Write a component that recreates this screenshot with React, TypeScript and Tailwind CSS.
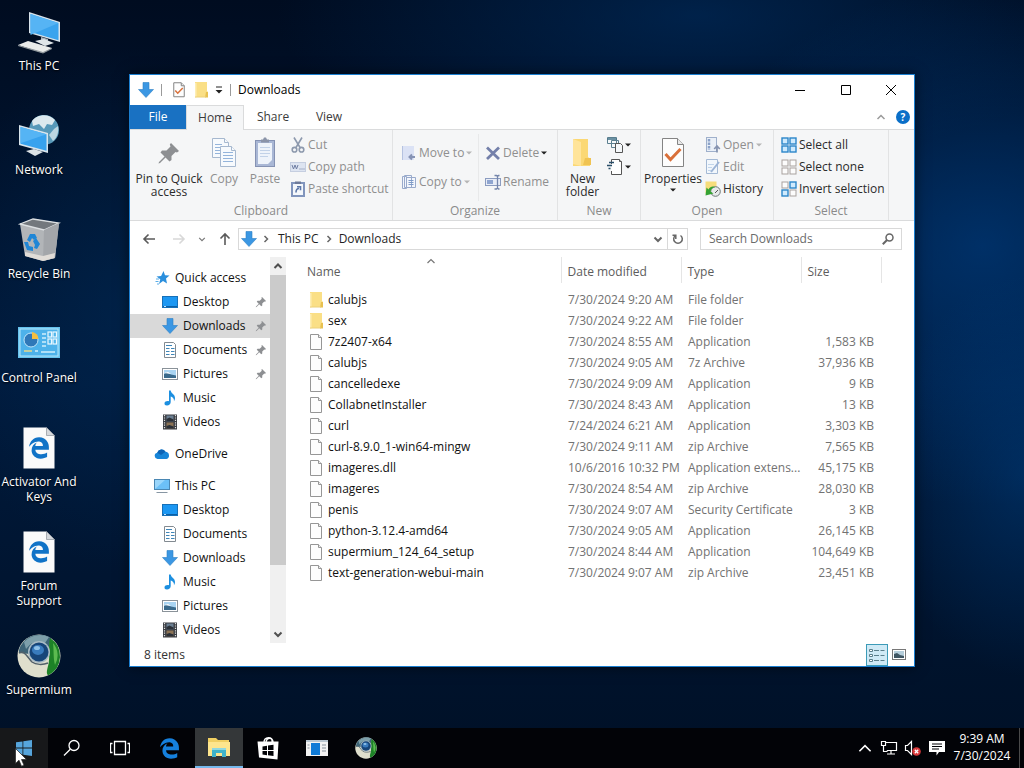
import type { ReactNode } from "react";
import { FaEdgeLegacy } from "react-icons/fa6";

/* ---------- shared icons ---------- */

const DownIcon = ({ className = "w-4 h-4" }: { className?: string }) => (
  <svg viewBox="0 0 16 16" className={className}>
    <path d="M5 0.500h6v7h4.500L8 15.500L0.500 7.500H5z" fill="#3b97e3" stroke="#2d7fc4" strokeWidth="0.600" />
  </svg>
);

const FolderIcon = ({ className = "w-4 h-4" }: { className?: string }) => (
  <svg viewBox="0 0 16 16" className={className}>
    <path d="M2 0h12v9l1 1v5H2z" fill="#fadf86" />
    <path d="M2 1h1.500v14.500H2z" fill="#fdeeb5" />
    <path d="M13 10h2v5.500h-3z" fill="#e8c150" />
    <path d="M2 15h11" stroke="#ecd07a" />
  </svg>
);

const FileIcon = () => (
  <svg viewBox="0 0 16 16" className="w-4 h-4">
    <path d="M2.500 0.500h8l3 3v12h-11z" fill="#fdfdfd" stroke="#969696" />
    <path d="M10.500 0.500v3h3" fill="#eee" stroke="#969696" />
  </svg>
);

const PinIcon = ({ className }: { className: string }) => (
  <svg viewBox="0 0 24 24" className={className}>
    <path
      d="M14 2l8 8-2 1.500-1.500-0.500-4 4 0 4-2 1.500-4-4L3 22l-1.500 0.500L2 21l5.500-5.500-4-4L5 9.500l4.500 0 4-4L12.800 3.500z"
      fill="#8d8f92"
    />
  </svg>
);

const StarIcon = () => (
  <svg viewBox="0 0 16 16" className="w-4 h-4">
    <path d="M9.500 1l1.500 4.300 4.500 0.200-3.500 3 1 5L9 11 5 14l1.300-4.800L2.500 6.500l4.600-0.500z" fill="#2b8fdd" />
    <path d="M2 9h3M1.500 11.500h3M3 14h2" stroke="#5baee8" strokeWidth="1" />
  </svg>
);

const DesktopIcon = () => (
  <svg viewBox="0 0 16 16" className="w-4 h-4">
    <rect x="0.500" y="2.500" width="15" height="11" fill="#1c97f2" stroke="#1670b8" />
    <path d="M1 12.500h14" stroke="#0b5fa5" />
    <path d="M2 12.500h2" stroke="#bfe2ff" />
  </svg>
);

const DocumentIcon = () => (
  <svg viewBox="0 0 16 16" className="w-4 h-4">
    <path d="M2.500 0.500h9l2 2v13h-11z" fill="#fff" stroke="#828a91" />
    <path d="M4 3.500h6M4 6.500h3.500M9 6.500h3.500M4 9.500h3.500M9 9.500h3.500M4 12.500h3.500M9 12.500h3.500" stroke="#3f86b8" strokeWidth="1.200" />
  </svg>
);

const PictureIcon = () => (
  <svg viewBox="0 0 16 16" className="w-4 h-4">
    <rect x="0.500" y="2.500" width="15" height="11" fill="#fff" stroke="#8a9299" />
    <rect x="2" y="4" width="12" height="8" fill="#a9d4f2" />
    <path d="M2 8l3-1.500 4 2 5 1v2.500H2z" fill="#3a6a8c" />
    <path d="M2 7l4-1 3 2z" fill="#fff" />
  </svg>
);

const MusicIcon = () => (
  <svg viewBox="0 0 16 16" className="w-4 h-4">
    <path d="M7 0.500h1.700c0.300 3 4.300 3.500 4.300 7.500 0 1.300-0.500 2.500-1 3.200 0.200-3-1.500-4.200-3.300-4.700V12c0 2-1.700 3.500-3.700 3.500S2.500 14.500 2.500 13.200 4.200 11 5.700 11c0.500 0 1 0.100 1.300 0.300z" fill="#1c8fe0" />
  </svg>
);

const VideoIcon = () => (
  <svg viewBox="0 0 16 16" className="w-4 h-4">
    <rect x="1" y="0.500" width="14" height="15" fill="#3a3d42" />
    <path d="M2.500 1v14M13.500 1v14" stroke="#e2e2e2" strokeWidth="1.200" strokeDasharray="1.200 1.200" />
    <rect x="4.500" y="1.500" width="7" height="6" fill="#6b7f92" />
    <rect x="4.500" y="8.500" width="7" height="6" fill="#8b7355" />
    <path d="M4.500 5l3-1.500 4 2v2h-7zM4.500 12l3-1 4 1.500v2h-7z" fill="#2a3038" />
  </svg>
);

const CloudIcon = () => (
  <svg viewBox="0 0 16 16" className="w-4 h-4">
    <path d="M3.500 13a3.200 3.200 0 0 1-0.300-6.300A4.600 4.600 0 0 1 11.500 5.800 3.700 3.700 0 0 1 12.500 13z" fill="#1785d8" />
    <path d="M3.200 6.700A4.600 4.600 0 0 1 11.500 5.800L7 9z" fill="#0c63b5" />
  </svg>
);

const PcIcon = () => (
  <svg viewBox="0 0 16 16" className="w-4 h-4">
    <rect x="0.500" y="1.500" width="15" height="10" fill="#6cc0f7" stroke="#4a87b3" />
    <path d="M1 11L11 2H1z" fill="#9ad6fb" />
    <path d="M2.500 14.500h11" stroke="#8796a3" />
  </svg>
);

const SupermiumIcon = ({ className }: { className: string }) => (
  <svg viewBox="0 0 44 44" className={className}>
    <circle cx="22" cy="22" r="21.500" fill="#dfdfcd" />
    <path d="M3.500 12A21.500 21.500 0 0 1 34 4L31 16 13 20 2 19C1.500 17 2.500 14 3.500 12z" fill="#3d6477" />
    <path d="M7 8A21.500 21.500 0 0 1 32 3L28 9C20 6 14 8 9 15z" fill="#7d9faa" />
    <path d="M33 4A21.500 21.500 0 0 1 31 41.500C28 38 32 32 32 26 33 19 31 12 33 4z" fill="#1d8227" />
    <path d="M36 9a19 19 0 0 1 2 22c-2-8-1-15-2-22z" fill="#5cbb50" />
    <path d="M2 19c6-3 8 4 13 9 4 3 11 3 16 1" fill="none" stroke="#51606a" strokeWidth="1.500" />
    <circle cx="22" cy="18" r="11" fill="#a9bbc5" />
    <circle cx="22" cy="18" r="9.500" fill="#174579" />
    <ellipse cx="21" cy="16" rx="6" ry="5" fill="#397bbd" />
    <ellipse cx="20" cy="14" rx="3" ry="2" fill="#8fc1e8" />
  </svg>
);

const Caret = ({ color = "#222" }: { color?: string }) => (
  <svg viewBox="0 0 6 4" className="w-[6px] h-[4px] shrink-0">
    <path d="M0 0.500h6L3 3.500z" fill={color} />
  </svg>
);

const Chevron = ({ d, className = "w-[10px] h-[10px]", color = "#666", width = 1.500 }: { d: string; className?: string; color?: string; width?: number }) => (
  <svg viewBox="0 0 10 10" className={className} fill="none" stroke={color} strokeWidth={width}>
    <path d={d} />
  </svg>
);

const UP = "M1.500 7L5 3.500 8.500 7";
const DOWN = "M1.500 3.500L5 7 8.500 3.500";
const RIGHT = "M3.500 2L6.500 5 3.500 8";

/* ---------- desktop ---------- */

const EdgePage = () => (
  <svg viewBox="0 0 44 44" className="w-11 h-11">
    <path d="M6.500 1.500h23l8 8v33h-31z" fill="#fafafa" />
    <path d="M29.500 1.500v8h8z" fill="#d5d8dc" stroke="#8d949b" strokeWidth="0.700" />
    <FaEdgeLegacy x="11" y="11" size={22} color="#1173c7" />
  </svg>
);

const desktopItems = [
  {
    label: "This PC",
    icon: (
      <svg viewBox="0 0 44 44" className="w-11 h-11">
        <path d="M12 2l31 10v20L12 23z" fill="#d9e3ea" />
        <path d="M13.500 4l28 9v17.200l-28-8.200z" fill="#3aa4ee" />
        <path d="M13.500 4l28 9-28 12z" fill="#56b4f4" />
        <path d="M24 27l7 2v4l-7-2z" fill="#a8b2ba" />
        <path d="M18 31l9-2 10 4-9 3z" fill="#dfe5e8" />
        <path d="M1 35l10-4 24 7-9 5z" fill="#e9ebea" />
        <path d="M1 35l25 7 9-4v1l-9 4.500L1 36z" fill="#8f979c" />
      </svg>
    ),
  },
  {
    label: "Network",
    icon: (
      <svg viewBox="0 0 44 44" className="w-11 h-11">
        <circle cx="27" cy="16" r="15" fill="#5799b9" />
        <path d="M15 7c5-7 17-8 23-1l-3 5-5-1-3 5-5-5-6 2z" fill="#dce9ee" />
        <path d="M37 15l4-3c1 6-1 12-5 15l-4-6z" fill="#bcd6e1" />
        <path d="M2 11l29 8v20L2 31z" fill="#d8e4eb" />
        <path d="M3.500 13l26 7.200v16.500l-26-7z" fill="#37a2ee" />
        <path d="M3.500 13l26 7.200-26 9z" fill="#55b4f4" />
        <path d="M9 37l8-2 9 3-8 4z" fill="#dde3e6" />
      </svg>
    ),
  },
  {
    label: "Recycle Bin",
    icon: (
      <svg viewBox="0 0 44 44" className="w-11 h-11">
        <path d="M3 6L16 1l26 4-4 35-12 3L8 38z" fill="#b2b5b8" />
        <path d="M3 6L16 1l26 4-15 7z" fill="#73787d" stroke="#dce0e2" strokeWidth="1.300" />
        <path d="M27 12l15-7-4 35-12 3z" fill="#a3a6aa" />
        <path d="M8 34l18 4 12-3-0.500 5L26 43 8 38z" fill="#e0dcd7" />
        <g fill="#1f86d6">
          <path d="M10 22l3-6 5 0 2 4-3 2-2-2-2 4z" />
          <path d="M19 20l4 6-3 5-3-1 1-3-2-4z" />
          <path d="M7 24l4 0 1 4 4 1 0 4-6-1z" />
        </g>
      </svg>
    ),
  },
  {
    label: "Control Panel",
    icon: (
      <svg viewBox="0 0 44 44" className="w-11 h-11">
        <rect x="1" y="5" width="42" height="31" fill="#65c2ee" />
        <rect x="3" y="7" width="38" height="27" fill="#4db2ea" stroke="#b5e5fa" />
        <circle cx="14" cy="18" r="7" fill="#2f78b8" stroke="#bfe6fa" />
        <path d="M15 17v-7a7 7 0 0 1 6.500 7z" fill="#f4bf3f" />
        <path d="M25 12h4M25 16h4M25 20h4M25 24h4M18 29h3M24 30h14" stroke="#cfeefc" strokeWidth="1.500" />
        <g fill="#4fb4ea" stroke="#eaf8ff" strokeWidth="1.200">
          <rect x="31" y="10" width="3.500" height="5" />
          <rect x="36" y="10" width="3.500" height="5" />
          <rect x="31" y="17" width="3.500" height="5" />
          <rect x="36" y="17" width="3.500" height="5" />
        </g>
        <path d="M7 29h8" stroke="#e8d98a" strokeWidth="1.500" />
      </svg>
    ),
  },
  { label: "Activator And Keys", icon: <EdgePage /> },
  { label: "Forum Support", icon: <EdgePage /> },
  { label: "Supermium", icon: <SupermiumIcon className="w-11 h-11" /> },
];

/* ---------- ribbon ---------- */

const copyIcon = (
  <svg viewBox="0 0 32 32" className="w-8 h-8">
    <g fill="#f7fafd" stroke="#a6b8cf">
      <path d="M4.500 1.500h12l4 4v15h-16z" />
      <path d="M16.500 1.500v4h4" />
      <path d="M12.500 9.500h11l4 4v16h-15z" />
      <path d="M23.500 9.500v4h4" />
    </g>
    <path d="M7 7.500h7M7 10.500h5M7 13.500h5M7 16.500h5M15 15.500h10M15 18.500h10M15 21.500h10M15 24.500h10" stroke="#94b4db" />
  </svg>
);

const pasteIcon = (
  <svg viewBox="0 0 32 32" className="w-8 h-8">
    <rect x="6.500" y="3.500" width="19" height="26" fill="#a9b7d5" stroke="#8592b3" />
    <path d="M9 6h14v17l-4 4H9z" fill="#eef3fa" />
    <path d="M12 5.500V2.500h2l1-2h2l1 2h2v3z" fill="#8a93a8" />
    <path d="M11 10.500h10M11 13.500h10M11 16.500h10M11 19.500h8" stroke="#c2d2e8" />
  </svg>
);

const cutIcon = (
  <svg viewBox="0 0 16 16" className="w-4 h-4" fill="none" stroke="#8d99ad" strokeWidth="1.600">
    <path d="M4 0.500l6 10M12 0.500l-6 10" />
    <circle cx="4.500" cy="12.700" r="2.300" />
    <circle cx="11.500" cy="12.700" r="2.300" />
  </svg>
);

const copyPathIcon = (
  <svg viewBox="0 0 16 16" className="w-4 h-4">
    <rect x="0.500" y="3.500" width="15" height="9" fill="#dde4f1" stroke="#c5cee0" />
    <path d="M2 6l1.500 4L5 6l1.500 4L8 6M9.500 10h1M11.500 10h1M13.500 10h1" stroke="#6e7da3" fill="none" />
  </svg>
);

const pasteShortcutIcon = (
  <svg viewBox="0 0 16 16" className="w-4 h-4">
    <rect x="2" y="2" width="12" height="13" fill="#f4f7fb" stroke="#8195bd" strokeWidth="2" />
    <path d="M5 0.500h6v2.500H5z" fill="#6d7a99" />
    <path d="M6 11.500c0-3 1-4 3-4M7 5.800h3.500v3.500" stroke="#5c77a8" strokeWidth="1.600" fill="none" />
  </svg>
);

const moveToIcon = (
  <svg viewBox="0 0 16 16" className="w-4 h-4">
    <path d="M1 1h12v14H1z" fill="#dbe2f5" />
    <path d="M1 1h1v14H1z" fill="#b5c2e0" />
    <path d="M14 12H8m3-2.500L8.500 12l2.500 2.500" stroke="#8693b5" strokeWidth="2" fill="none" />
  </svg>
);

const copyToIcon = (
  <svg viewBox="0 0 16 16" className="w-4 h-4" fill="#f3f6fc" stroke="#99aacb">
    <path d="M1.500 2.500h4v12h-4zM3.500 1.500h7v12h-7zM5.500 3.500h9v10h-9z" />
    <path d="M7.500 6.500h5M7.500 8.500h5M7.500 10.500h5" stroke="#7e9cc9" />
  </svg>
);

const deleteIcon = (
  <svg viewBox="0 0 16 16" className="w-4 h-4">
    <path d="M2 2.500l12 11.500M14 2.500L2 14" stroke="#7480aa" strokeWidth="2.800" />
  </svg>
);

const renameIcon = (
  <svg viewBox="0 0 16 16" className="w-4 h-4" fill="none" stroke="#8b9cc0">
    <rect x="0.500" y="4.500" width="15" height="7" fill="#e8edf7" />
    <rect x="2" y="6" width="6" height="4" fill="#8fa5d0" stroke="none" />
    <path d="M9.500 1.500h2l1 1 1-1h1M12.500 2.500v12M9.500 15h2l1-1 1 1h1" stroke="#7485ab" strokeWidth="1.300" />
  </svg>
);

const newFolderIcon = (
  <svg viewBox="0 0 32 32" className="w-8 h-8">
    <path d="M6 2h15v18l2 2v7H6z" fill="#fbd874" />
    <path d="M6 2l8 3v24l-8-2z" fill="#ffe49a" />
    <path d="M18 21h6v7h-8z" fill="#f0c352" />
  </svg>
);

const newItemIcon = (
  <svg viewBox="0 0 16 16" className="w-4 h-4" fill="#f5f8fa" stroke="#5b7f8f">
    <path d="M0.500 0.500h9v6h-9zM4.500 3.500h7v7h-7z" />
    <path d="M0.500 2h9" stroke="#3d6f86" strokeWidth="1.500" />
    <path d="M8.500 6.500h5l2 2v7h-7z" stroke="#555" />
  </svg>
);

const easyAccessIcon = (
  <svg viewBox="0 0 16 16" className="w-4 h-4" fill="#fff" stroke="#555">
    <path d="M4.500 5V0.500h8l2 2v13h-10V12" />
    <path d="M12.500 0.500v2h2" />
    <path d="M2 3.500h5M0 6.500h5M1.500 9.500h2" stroke="#294e69" strokeWidth="1.400" />
  </svg>
);

const PropertiesIcon = ({ className, line = 1 }: { className: string; line?: number }) => (
  <svg viewBox="0 0 32 32" className={className}>
    <path d="M5.500 1.500h15l6 6v22h-21z" fill="#fdfdfd" stroke="#848484" strokeWidth={line} />
    <path d="M20.500 1.500v6h6" fill="#e8e8e8" stroke="#848484" strokeWidth={line} />
    <path d="M8.500 17l5 5.500 10-10.500" fill="none" stroke="#d9703a" strokeWidth="3" />
  </svg>
);

const openIcon = (
  <svg viewBox="0 0 16 16" className="w-4 h-4" fill="none" stroke="#9fb0cb">
    <rect x="1.500" y="0.500" width="10" height="14" fill="#eaf0f8" />
    <path d="M4 2v11" stroke="#8ba2c8" strokeWidth="2.500" strokeDasharray="2.500 1" />
    <path d="M12 15.500V9m-2.800 3L12 9l2.800 3" stroke="#8593b0" strokeWidth="1.700" />
  </svg>
);

const editIcon = (
  <svg viewBox="0 0 16 16" className="w-4 h-4" fill="none" stroke="#a4b9d4">
    <path d="M1.500 0.500h11v14h-11z" fill="#f2f7fc" />
    <path d="M3 5.500h6M3 8.500h4M3 11.500h3" stroke="#c2d5ea" />
    <path d="M14 3L6 13" stroke="#9cb4d6" strokeWidth="2" />
  </svg>
);

const historyIcon = (
  <svg viewBox="0 0 16 16" className="w-4 h-4">
    <path d="M0.500 0.500h11v12h-11z" fill="#f6dd7b" />
    <circle cx="10.500" cy="10.500" r="4.800" fill="#e7eaea" stroke="#6d7777" />
    <path d="M10 12l3-3" stroke="#555" fill="none" />
    <path d="M0.500 14.500l1-8 2 2c2-3.500 5-3.500 6.500-2-3 0-4 2-4.500 4l3 2z" fill="#35a333" />
  </svg>
);

const tile = (x: number, y: number, on: boolean) => (
  <rect x={x} y={y} width="6" height="6" fill={on ? "#cfeafd" : "#fcfcfc"} stroke={on ? "#2b86c9" : "#a9a29f"} strokeWidth={on ? 1.400 : 1} />
);

const selectIcon = (a: boolean, b: boolean, c: boolean, d: boolean) => (
  <svg viewBox="0 0 16 16" className="w-4 h-4">
    {tile(1, 1, a)}
    {tile(9, 1, b)}
    {tile(1, 9, c)}
    {tile(9, 9, d)}
  </svg>
);

function SmallButton({ icon, label, muted, caret }: { icon: ReactNode; label: string; muted?: boolean; caret?: string }) {
  return (
    <button type="button" className={`flex items-center gap-[2px] h-[22px] whitespace-nowrap ${muted ? "text-[#8f8f8f]" : "text-[#2b2b2b]"}`}>
      {icon}
      <span>{label}</span>
      {caret && <Caret color={caret} />}
    </button>
  );
}

function BigButton({ icon, label, muted, width, caret }: { icon: ReactNode; label: string; muted?: boolean; width: string; caret?: boolean }) {
  return (
    <button type="button" className={`flex flex-col items-center gap-[3px] pt-[3px] leading-[13px] ${width} ${muted ? "text-[#8f8f8f]" : "text-[#2b2b2b]"}`}>
      {icon}
      <span>{label}</span>
      {caret && <Caret />}
    </button>
  );
}

function RibbonGroup({ name, className, children }: { name: string; className: string; children: ReactNode }) {
  return (
    <section aria-label={name} className={`flex flex-col shrink-0 border-r border-[#e2e3e4] ${className}`}>
      <div className="flex items-start grow pt-1">{children}</div>
      <div className="text-center text-[#8a8a8a] h-[17px] leading-4">{name}</div>
    </section>
  );
}

function Ribbon() {
  return (
    <div className="flex h-[92px] shrink-0 bg-[#f5f6f7] border-y border-[#dadbdc]">
      <RibbonGroup name="Clipboard" className="w-[263px]">
        <BigButton icon={<span className="w-8 h-8 grid place-items-center"><PinIcon className="w-6 h-6" /></span>} label="Pin to Quick access" width="w-[78px]" />
        <BigButton icon={copyIcon} label="Copy" muted width="w-8" />
        <BigButton icon={pasteIcon} label="Paste" muted width="w-[50px]" />
        <div>
          <SmallButton icon={cutIcon} label="Cut" muted />
          <SmallButton icon={copyPathIcon} label="Copy path" muted />
          <SmallButton icon={pasteShortcutIcon} label="Paste shortcut" muted />
        </div>
      </RibbonGroup>
      <RibbonGroup name="Organize" className="w-[165px]">
        <div className="flex flex-col gap-[7px] w-[86px] pl-2 pt-2 pb-2 border-r border-[#e8e9ea]">
          <SmallButton icon={moveToIcon} label="Move to" muted caret="#b5b5b5" />
          <SmallButton icon={copyToIcon} label="Copy to" muted caret="#b5b5b5" />
        </div>
        <div className="flex flex-col gap-[7px] pl-[6px] pt-2">
          <SmallButton icon={deleteIcon} label="Delete" muted caret="#222" />
          <SmallButton icon={renameIcon} label="Rename" muted />
        </div>
      </RibbonGroup>
      <RibbonGroup name="New" className="w-[83px]">
        <BigButton icon={newFolderIcon} label="New folder" width="w-[49px]" />
        <div>
          <button type="button" aria-label="New item" className="flex items-center gap-[2px] h-[22px]">
            {newItemIcon}
            <Caret />
          </button>
          <button type="button" aria-label="Easy access" className="flex items-center gap-[2px] h-[22px]">
            {easyAccessIcon}
            <Caret />
          </button>
        </div>
      </RibbonGroup>
      <RibbonGroup name="Open" className="w-[133px]">
        <BigButton icon={<PropertiesIcon className="w-8 h-8" />} label="Properties" width="w-16" caret />
        <div>
          <SmallButton icon={openIcon} label="Open" muted caret="#b5b5b5" />
          <SmallButton icon={editIcon} label="Edit" muted />
          <SmallButton icon={historyIcon} label="History" />
        </div>
      </RibbonGroup>
      <RibbonGroup name="Select" className="w-[115px]">
        <div className="pl-[7px]">
          <SmallButton icon={selectIcon(true, true, true, true)} label="Select all" />
          <SmallButton icon={selectIcon(false, false, false, false)} label="Select none" />
          <SmallButton icon={selectIcon(false, true, true, false)} label="Invert selection" />
        </div>
      </RibbonGroup>
    </div>
  );
}

/* ---------- explorer ---------- */

const quickAccess = [
  { label: "Desktop", icon: <DesktopIcon />, pinned: true },
  { label: "Downloads", icon: <DownIcon />, pinned: true, active: true },
  { label: "Documents", icon: <DocumentIcon />, pinned: true },
  { label: "Pictures", icon: <PictureIcon />, pinned: true },
  { label: "Music", icon: <MusicIcon /> },
  { label: "Videos", icon: <VideoIcon /> },
];

const thisPc = [
  { label: "Desktop", icon: <DesktopIcon /> },
  { label: "Documents", icon: <DocumentIcon /> },
  { label: "Downloads", icon: <DownIcon /> },
  { label: "Music", icon: <MusicIcon /> },
  { label: "Pictures", icon: <PictureIcon /> },
  { label: "Videos", icon: <VideoIcon /> },
];

const files = [
  { name: "calubjs", date: "7/30/2024 9:20 AM", type: "File folder", size: "", folder: true },
  { name: "sex", date: "7/30/2024 9:22 AM", type: "File folder", size: "", folder: true },
  { name: "7z2407-x64", date: "7/30/2024 8:55 AM", type: "Application", size: "1,583 KB" },
  { name: "calubjs", date: "7/30/2024 9:05 AM", type: "7z Archive", size: "37,936 KB" },
  { name: "cancelledexe", date: "7/30/2024 9:09 AM", type: "Application", size: "9 KB" },
  { name: "CollabnetInstaller", date: "7/30/2024 8:43 AM", type: "Application", size: "13 KB" },
  { name: "curl", date: "7/24/2024 6:21 AM", type: "Application", size: "3,303 KB" },
  { name: "curl-8.9.0_1-win64-mingw", date: "7/30/2024 9:11 AM", type: "zip Archive", size: "7,565 KB" },
  { name: "imageres.dll", date: "10/6/2016 10:32 PM", type: "Application extens...", size: "45,175 KB" },
  { name: "imageres", date: "7/30/2024 8:54 AM", type: "zip Archive", size: "28,030 KB" },
  { name: "penis", date: "7/30/2024 9:07 AM", type: "Security Certificate", size: "3 KB" },
  { name: "python-3.12.4-amd64", date: "7/30/2024 9:05 AM", type: "Application", size: "26,145 KB" },
  { name: "supermium_124_64_setup", date: "7/30/2024 8:44 AM", type: "Application", size: "104,649 KB" },
  { name: "text-generation-webui-main", date: "7/30/2024 9:07 AM", type: "zip Archive", size: "23,451 KB" },
];

function NavItem({ label, icon, root, pinned, active }: { label: string; icon: ReactNode; root?: boolean; pinned?: boolean; active?: boolean }) {
  return (
    <a href="#" className={`flex items-center gap-[5px] h-6 pr-[3px] ${root ? "pl-6" : "pl-8"} ${active ? "bg-[#d9d9d9]" : ""}`}>
      {icon}
      <span className="grow whitespace-nowrap">{label}</span>
      {pinned && <PinIcon className="w-3 h-3" />}
    </a>
  );
}

function NavPane() {
  return (
    <div className="flex w-[156px] shrink-0">
      <nav className="grow pt-[9px] text-[#111] overflow-hidden">
        <NavItem label="Quick access" icon={<StarIcon />} root />
        {quickAccess.map((item) => (
          <NavItem key={item.label} {...item} />
        ))}
        <div className="h-2" />
        <NavItem label="OneDrive" icon={<CloudIcon />} root />
        <div className="h-2" />
        <NavItem label="This PC" icon={<PcIcon />} root />
        {thisPc.map((item) => (
          <NavItem key={item.label} {...item} />
        ))}
      </nav>
      <div className="w-4 flex flex-col bg-[#f0f0f0]">
        <button type="button" aria-label="Scroll up" className="h-[18px] shrink-0 grid place-items-center">
          <Chevron d={UP} color="#505050" width={2} />
        </button>
        <div className="h-3/4 bg-[#cbcbcb]" />
        <button type="button" aria-label="Scroll down" className="mt-auto h-[18px] shrink-0 grid place-items-center">
          <Chevron d={DOWN} color="#505050" width={2} />
        </button>
      </div>
    </div>
  );
}

function FileList() {
  return (
    <div className="grow relative">
      <span className="absolute -top-px left-[140px]">
        <Chevron d={UP} color="#777" width={1.200} />
      </span>
      <table className="w-full table-fixed text-left text-[#727272] whitespace-nowrap">
        <thead>
          <tr className="h-[26px] text-[#5c5c5c]">
            <th className="font-normal pt-[3px] pl-[21px]">Name</th>
            <th className="w-[120px] font-normal pt-[3px] pl-[6px] border-l border-[#e5e5e5]">Date modified</th>
            <th className="w-[120px] font-normal pt-[3px] pl-[6px] border-l border-[#e5e5e5]">Type</th>
            <th className="w-20 font-normal pt-[3px] pl-[6px] border-x border-[#e5e5e5]">Size</th>
            <th className="w-[33px]" />
          </tr>
        </thead>
        <tbody>
          <tr className="h-[6px]" />
          {files.map((file) => (
            <tr key={file.name + file.type} className="h-[21px]">
              <td className="p-0 pl-[22px] text-[#111]">
                <div className="flex items-center gap-1">
                  {file.folder ? <FolderIcon /> : <FileIcon />}
                  {file.name}
                </div>
              </td>
              <td className="p-0 pl-[7px]">{file.date}</td>
              <td className="p-0 pl-[7px]">{file.type}</td>
              <td className="p-0 pr-[7px] text-right">{file.size}</td>
              <td />
            </tr>
          ))}
        </tbody>
      </table>
    </div>
  );
}

function TitleBar() {
  return (
    <header className="flex items-center h-[30px] shrink-0 pl-2 text-black">
      <DownIcon className="w-4 h-4" />
      <span className="w-px h-3 ml-[7px] mr-[9px] bg-[#9a9a9a]" />
      <PropertiesIcon className="w-4 h-4" line={2} />
      <FolderIcon className="w-4 h-4 ml-[6px]" />
      <svg viewBox="0 0 8 8" className="w-2 h-2 ml-[6px]">
        <path d="M1 1h6" stroke="#222" />
        <path d="M0.500 4h7L4 7.500z" fill="#222" />
      </svg>
      <span className="w-px h-3 mx-[7px] bg-[#9a9a9a]" />
      <h1>Downloads</h1>
      <div className="ml-auto flex">
        <button type="button" aria-label="Minimize" className="w-[46px] h-7 grid place-items-center">
          <svg viewBox="0 0 10 10" className="w-[10px] h-[10px]"><path d="M0 5.500h10" stroke="#000" /></svg>
        </button>
        <button type="button" aria-label="Maximize" className="w-[45px] h-7 grid place-items-center">
          <svg viewBox="0 0 10 10" className="w-[10px] h-[10px]"><path d="M0.500 0.500h9v9h-9z" stroke="#000" fill="none" /></svg>
        </button>
        <button type="button" aria-label="Close" className="w-[46px] h-7 grid place-items-center">
          <svg viewBox="0 0 10 10" className="w-[10px] h-[10px]"><path d="M0 0l10 10M10 0L0 10" stroke="#000" /></svg>
        </button>
      </div>
    </header>
  );
}

function Explorer() {
  return (
    <main className="absolute left-[129px] right-[109px] top-[74px] bottom-[101px] flex flex-col bg-white border border-[#1b7fd0] shadow-[0_0_12px_rgba(0,0,0,0.5)]">
      <TitleBar />
      <div className="flex h-6 shrink-0 text-[#3b3b3b]">
        <button type="button" className="w-14 bg-[#1971c2] text-white">File</button>
        <button type="button" className="w-[58px] -mb-px bg-[#f5f6f7] border border-b-0 border-[#dadbdc] relative">Home</button>
        <button type="button" className="w-[58px]">Share</button>
        <button type="button" className="w-[54px]">View</button>
        <div className="ml-auto flex items-center gap-[10px] pr-1">
          <Chevron d={UP} color="#9b9b9b" />
          <button type="button" aria-label="Help" className="w-[14px] h-[14px] rounded-full bg-[#0a6fc8] text-white text-[10px] leading-[14px] font-bold">?</button>
        </div>
      </div>
      <Ribbon />
      <div className="flex items-center h-9 shrink-0 pr-3 text-[#1f1f1f]">
        <div className="flex items-center w-[108px] shrink-0 pl-3">
          <svg viewBox="0 0 14 14" className="w-[14px] h-[14px]"><path d="M13 7H2M6.500 2.500L2 7l4.500 4.500" stroke="#5a5a5a" strokeWidth="1.600" fill="none" /></svg>
          <svg viewBox="0 0 14 14" className="w-[14px] h-[14px] ml-4"><path d="M1 7h11M7.500 2.500L12 7l-4.500 4.500" stroke="#d8d8d8" strokeWidth="1.600" fill="none" /></svg>
          <Chevron d={DOWN} color="#777" className="w-2 h-2 ml-3" />
          <svg viewBox="0 0 14 14" className="w-[14px] h-[14px] ml-3"><path d="M7 13V2M2.500 6.500L7 2l4.500 4.500" stroke="#5a5a5a" strokeWidth="1.600" fill="none" /></svg>
        </div>
        <div className="flex items-center grow h-[22px] border border-[#d9d9d9] pl-[2px]">
          <DownIcon className="w-4 h-4" />
          <Chevron d={RIGHT} className="w-[10px] h-[10px] mx-1" />
          <span className="ml-[3px]">This PC</span>
          <Chevron d={RIGHT} className="w-[10px] h-[10px] mx-[5px]" />
          <span>Downloads</span>
          <span className="ml-auto mr-1"><Chevron d={DOWN} color="#666" width={2} /></span>
          <button type="button" aria-label="Refresh" className="w-5 h-5 border-l border-[#d9d9d9] grid place-items-center">
            <svg viewBox="0 0 12 12" className="w-3 h-3" fill="none" stroke="#666" strokeWidth="1.500">
              <path d="M8.500 2.500A4.300 4.300 0 1 1 3.500 2.500" />
              <path d="M3.800 6V2.200H0.500" />
            </svg>
          </button>
        </div>
        <label className="flex items-center w-[202px] shrink-0 h-[22px] ml-3 border border-[#d9d9d9] pl-2 pr-[7px]">
          <input type="text" aria-label="Search Downloads" placeholder="Search Downloads" className="grow min-w-0 outline-none placeholder:text-[#6b6b6b]" />
          <svg viewBox="0 0 12 12" className="w-3 h-3" fill="none" stroke="#666">
            <circle cx="7.500" cy="4.500" r="3.500" strokeWidth="1.500" />
            <path d="M5 7L0.800 11.200" strokeWidth="2" />
          </svg>
        </label>
      </div>
      <div className="flex grow min-h-0 overflow-hidden">
        <NavPane />
        <FileList />
      </div>
      <footer className="flex items-center h-[23px] shrink-0 pl-[14px] pr-2 text-[#333]">
        <span>8 items</span>
        <button type="button" aria-label="Details view" className="ml-auto w-[22px] h-[22px] grid place-items-center bg-[#cfeaf6] border border-[#3c9bb8]">
          <svg viewBox="0 0 16 14" className="w-4 h-[14px]" stroke="#5b7f8c">
            <path d="M0.500 1.500h3v2h-3zM0.500 6.500h3v2h-3zM0.500 11.500h3v2h-3z" fill="#fff" />
            <path d="M5 2.500h5M11.500 2.500h4M5 7.500h5M11.500 7.500h4M5 12.500h5M11.500 12.500h4" />
          </svg>
        </button>
        <button type="button" aria-label="Large icons view" className="ml-1">
          <svg viewBox="0 0 14 12" className="w-[14px] h-3">
            <rect x="0.500" y="0.500" width="13" height="10" fill="#fff" stroke="#777" />
            <path d="M2 2h10v7H2z" fill="#b5cedb" />
            <path d="M2 5l3-1 3 2 4 1v2H2z" fill="#3f5663" />
          </svg>
        </button>
      </footer>
    </main>
  );
}

/* ---------- taskbar ---------- */

function Taskbar() {
  return (
    <footer className="absolute inset-x-0 bottom-0 h-10 flex items-stretch bg-[#020307] text-white">
      <button type="button" aria-label="Start" className="w-12 grid place-items-center bg-[#17181a]">
        <svg viewBox="0 0 16 16" className="w-4 h-4" fill="#56a5dc">
          <path d="M0 2.300l6.500-0.900v6.200H0zM7.300 1.300L16 0v7.600H7.300zM0 8.400h6.500v6.200L0 13.700zM7.300 8.400H16V16l-8.700-1.200z" />
        </svg>
      </button>
      <button type="button" aria-label="Search" className="w-12 grid place-items-center">
        <svg viewBox="0 0 18 18" className="w-[18px] h-[18px]" fill="none" stroke="#fff" strokeWidth="1.300">
          <circle cx="11" cy="6.500" r="5" />
          <path d="M7.300 10.200L1 16.500" />
        </svg>
      </button>
      <button type="button" aria-label="Task view" className="w-12 grid place-items-center">
        <svg viewBox="0 0 20 16" className="w-5 h-4" fill="none" stroke="#fff" strokeWidth="1.300">
          <path d="M4.500 1.500h11v13h-11zM2.500 3.500h-2v9h2M17.500 3.500h2v9h-2" />
        </svg>
      </button>
      <button type="button" aria-label="Microsoft Edge" className="w-[51px] grid place-items-center">
        <FaEdgeLegacy className="w-[21px] h-[21px] text-[#1580dd]" />
      </button>
      <button type="button" aria-label="File Explorer" className="w-12 grid place-items-center bg-[#343739] border-b-2 border-[#76b9ed]">
        <svg viewBox="0 0 24 22" className="w-6 h-[22px]">
          <path d="M1 2h8l2 2h11v16H1z" fill="#f0cf62" />
          <path d="M1 6h22v14H1z" fill="#fde58d" />
          <path d="M5 12h14v9h-4v-4H9v4H5z" fill="#3fb3c9" />
          <path d="M5 12h14v2H5z" fill="#8fd8e0" />
        </svg>
      </button>
      <button type="button" aria-label="Store" className="w-[49px] grid place-items-center">
        <svg viewBox="0 0 22 24" className="w-[22px] h-6">
          <path d="M7 6.500c0-6 9-6.500 9-0.500M9 6c1-5 7-5 6 0" fill="none" stroke="#fff" strokeWidth="1.400" />
          <path d="M0.500 5.500h21L20.500 23.500 2 21.500z" fill="#fff" />
          <path d="M5.500 10.500l4.500-0.700v4.200H5.500zM11 9.600l5.500-0.800V14H11zM5.500 15H10v4.200l-4.500-0.700zM11 15h5.500v5L11 19.300z" fill="#020307" />
        </svg>
      </button>
      <button type="button" aria-label="Settings app" className="w-[49px] grid place-items-center">
        <svg viewBox="0 0 22 16" className="w-[22px] h-4">
          <rect width="22" height="16" fill="#f2f2f2" />
          <path d="M0 0h22v2H0z" fill="#b9c6d0" />
          <rect x="5" y="3" width="9" height="12" fill="#0f7ad6" />
          <path d="M16 5h4M16 8h4M16 11h4M1.500 5h2M1.500 8h2" stroke="#86909a" />
        </svg>
      </button>
      <button type="button" aria-label="Supermium" className="w-[49px] grid place-items-center">
        <SupermiumIcon className="w-[22px] h-[22px]" />
      </button>

      <div className="ml-auto flex items-center">
        <Chevron d={UP} color="#fff" width={1} className="w-4 h-4" />
        <svg viewBox="0 0 18 16" className="w-[18px] h-4 ml-[7px]" fill="none" stroke="#fff" strokeWidth="1.200">
          <path d="M5.500 2.500h11v8h-11M11 10.500v3M7 14h8" />
          <path d="M1.500 1.500h4v4h-4zM3.500 5.500v6h4" fill="#020307" />
        </svg>
        <svg viewBox="0 0 18 16" className="w-[18px] h-4 ml-[6px]">
          <path d="M1.500 5.500h2l4-4v13l-4-4h-2z" fill="none" stroke="#fff" strokeWidth="1.200" />
          <circle cx="12.500" cy="11.500" r="4.300" fill="#d9383a" />
          <path d="M10.800 9.800l3.400 3.400M14.200 9.800l-3.400 3.400" stroke="#fff" strokeWidth="1.300" />
        </svg>
        <svg viewBox="0 0 16 16" className="w-4 h-4 ml-[7px]">
          <path d="M0 1h16v11h-6l-2.500 3.500V12H0z" fill="#fff" />
          <path d="M3 4h10M3 6.500h10M3 9h7" stroke="#020307" strokeWidth="1.200" />
        </svg>
        <time className="w-[74px] pb-[2px] text-center leading-[17px] whitespace-nowrap">
          9:39 AM
          <br />
          7/30/2024
        </time>
        <span className="w-[5px] h-10 border-l border-[#4a4a4a]" />
      </div>

      <svg viewBox="0 0 12 19" className="absolute left-[15px] top-5 w-3 h-[19px]">
        <path d="M0.500 0.500v15l3.500-3.300 2.500 6 2.500-1-2.500-5.700h5z" fill="#fff" stroke="#222" strokeWidth="0.700" />
      </svg>
    </footer>
  );
}

export default function App() {
  return (
    <div className="relative h-screen min-h-[700px] overflow-hidden bg-[#00122c] bg-[radial-gradient(ellipse_140px_200px_at_100%_62%,#00479066,transparent),radial-gradient(ellipse_300px_260px_at_96%_32%,#00428a99,transparent),radial-gradient(ellipse_420px_150px_at_68%_2%,#00306599,transparent),radial-gradient(ellipse_180px_260px_at_12%_40%,#00306066,transparent),linear-gradient(#000c20,#001a3c_50%,#001026)] text-xs font-['Open_Sans','Noto_Sans',sans-serif]">
      <div className="flex flex-col w-[78px] pt-[10px] text-white text-center leading-[15px]">
        {desktopItems.map((item) => (
          <a key={item.label} href="#" className="flex flex-col items-center gap-1 h-[104px] [text-shadow:0_1px_2px_#000]">
            {item.icon}
            <span>{item.label}</span>
          </a>
        ))}
      </div>
      <Explorer />
      <Taskbar />
    </div>
  );
}
